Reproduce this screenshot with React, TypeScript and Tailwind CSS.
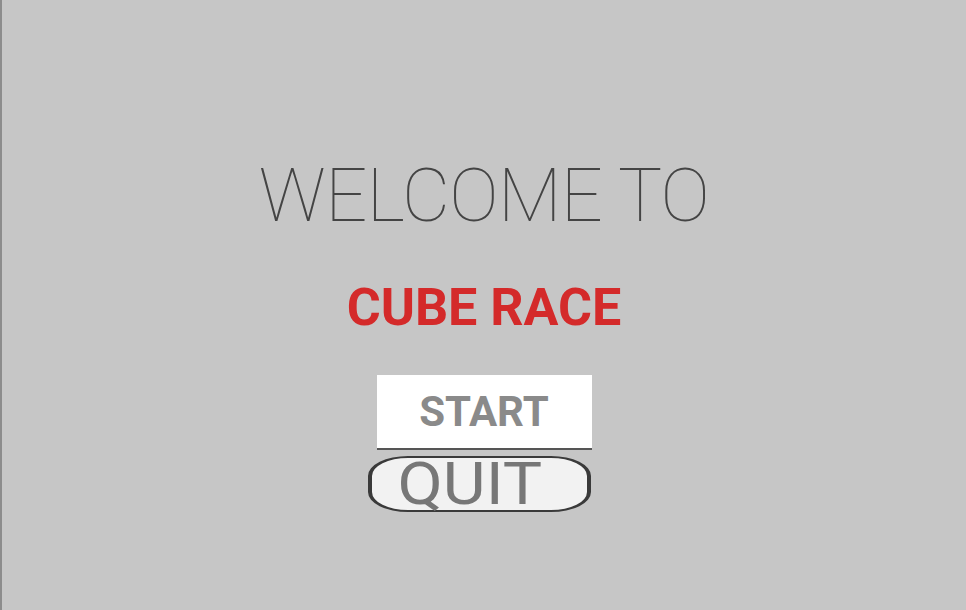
export default function App() {
  return (
    <div
      className="w-[966px] h-[610px] bg-[#c6c6c6] border-l-2 border-[#8c8c8c] flex flex-col items-center overflow-hidden"
      style={{ fontFamily: "Roboto, 'Liberation Sans', sans-serif" }}
    >
      <h1 className="mt-[159px] text-[74px] leading-none font-thin text-[#444444] tracking-[-0.6px]">
        WELCOME TO
      </h1>
      <h2 className="mt-[49px] text-[52px] leading-none font-bold text-[#d42a2a]">
        CUBE RACE
      </h2>
      <button className="mt-[41px] w-[215px] h-[75px] bg-white border-b-2 border-[#555555] flex items-center justify-center text-[42px] leading-none font-bold text-[#8a8a8a]">
        START
      </button>
      <button className="mt-[6px] -ml-[10px] w-[223px] h-[56px] bg-[#f2f2f2] border-y-2 border-x-[4px] border-[#3a3a3a] rounded-[40px/20px] flex items-center justify-center pr-[18px] text-[60px] leading-none text-[#777777]">
        <span className="inline-block scale-x-[1.1]">QUIT</span>
      </button>
    </div>
  );
}
